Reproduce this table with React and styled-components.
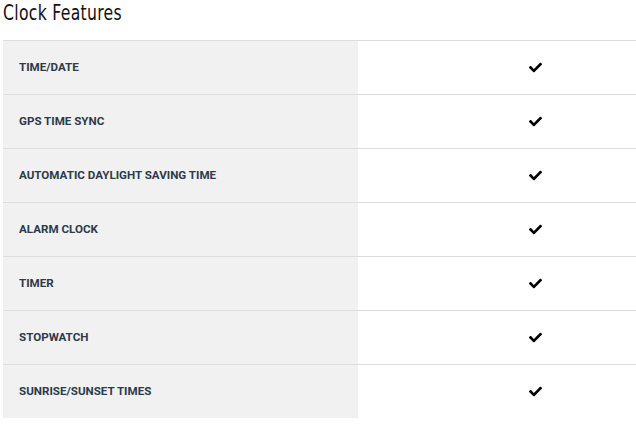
import React from "react";
import styled, { createGlobalStyle } from "styled-components";
import { FaCheck } from "react-icons/fa";

const features = [
  "TIME/DATE",
  "GPS TIME SYNC",
  "AUTOMATIC DAYLIGHT SAVING TIME",
  "ALARM CLOCK",
  "TIMER",
  "STOPWATCH",
  "SUNRISE/SUNSET TIMES",
];

const GlobalStyle = createGlobalStyle`
  html, body {
    margin: 0;
    padding: 0;
    background: #fff;
    overflow: hidden;
  }
`;

const Wrapper = styled.div`
  padding: 0 0 0 3px;
  width: 633px;
`;

const Title = styled.h2`
  margin: 0;
  padding-top: 1px;
  height: 39px;
  font-family: "DejaVu Sans Condensed", "Liberation Sans Narrow", sans-serif;
  font-weight: 400;
  font-size: 22px;
  line-height: 24px;
  letter-spacing: 0.4px;
  color: #111;
  transform: scaleX(0.79);
  transform-origin: left center;
`;

const Table = styled.div`
  display: grid;
  grid-template-columns: 355px 1fr;
`;

const Label = styled.div`
  display: flex;
  align-items: center;
  height: 53px;
  padding: 0 0 2px 16px;
  box-sizing: border-box;
  height: 54px;
  background: #f1f1f1;
  border-top: 1px solid #dddddd;
  font-family: Roboto, "Liberation Sans", sans-serif;
  font-weight: 700;
  font-size: 11.6px;
  color: #2c3a4b;
`;

const Value = styled.div`
  display: flex;
  align-items: center;
  box-sizing: border-box;
  height: 54px;
  padding-left: 171px;
  border-top: 1px solid #dddddd;
  color: #000;
  font-size: 13px;
`;

const App = () => (
  <Wrapper>
    <GlobalStyle />
    <Title>Clock Features</Title>
    <Table>
      {features.map((f) => (
        <React.Fragment key={f}>
          <Label>{f}</Label>
          <Value>
            <FaCheck />
          </Value>
        </React.Fragment>
      ))}
    </Table>
  </Wrapper>
);

export default App;
